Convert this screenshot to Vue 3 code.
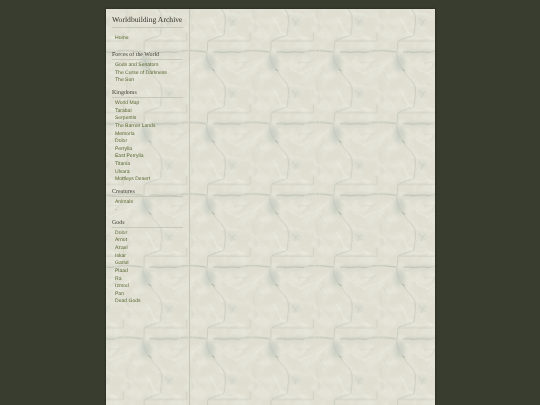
<script setup>
const sections = [
  { title: '', links: ['Home'] },
  { title: 'Forces of the World', links: ['Gods and Senators', 'The Curse of Darkness', 'The Sun'] },
  { title: 'Kingdoms', links: ['World Map', 'Tarabal', 'Serpentis', 'The Barren Lands', 'Memoria', 'Dolor', 'Perrylia', 'East Perrylia', 'Titania', 'Ulvara', 'Mottleys Desert'] },
  { title: 'Creatures', links: ['Animals', '-'] },
  { title: 'Gods', links: ['Dolor', 'Arnot', 'Azael', 'Iskar', 'Gariut', 'Plaad', 'Ra', 'Izmod', 'Pan', 'Dead Gods'] }
]
const offsets = [[0, 0], [0, -71.7], [0, 71.7], [-63.4, 0], [63.4, 0], [-63.4, -71.7], [63.4, -71.7], [-63.4, 71.7], [63.4, 71.7]]
</script>

<template>
  <div class="page">
    <div class="sheet">
      <svg class="marble" aria-hidden="true">
        <defs>
          <filter id="soft" x="-60%" y="-60%" width="220%" height="220%"><feGaussianBlur stdDeviation="2.2" /></filter>
          <filter id="wobble" x="-10%" y="-10%" width="120%" height="120%">
            <feTurbulence type="fractalNoise" baseFrequency="0.3" numOctaves="3" seed="4" result="n" />
            <feDisplacementMap in="SourceGraphic" in2="n" scale="2" xChannelSelector="R" yChannelSelector="G" />
            <feGaussianBlur stdDeviation="0.22" />
          </filter>
          <filter id="mottle" x="0" y="0" width="100%" height="100%">
            <feTurbulence type="fractalNoise" baseFrequency="0.1" numOctaves="4" seed="9" stitchTiles="stitch" />
            <feColorMatrix type="matrix" values="0 0 0 0 0.93  0 0 0 0 0.92  0 0 0 0 0.87  0.8 0 0 0 -0.32" />
          </filter>
          <g id="veins">
            <ellipse cx="3" cy="54" rx="5" ry="8" fill="#b9c3ba" opacity="0.5" filter="url(#soft)" />
            <ellipse cx="24" cy="43" rx="17" ry="3" fill="#cbd0c5" opacity="0.35" filter="url(#soft)" />
            <ellipse cx="26" cy="13" rx="4" ry="4" fill="#cbd0c6" opacity="0.4" filter="url(#soft)" />
            <g fill="none" filter="url(#wobble)">
              <path d="M7.3 61C10 68 18 72 19 79C20 85 18 92 18 98C12 100 6 101 2 104" stroke="#aeb4a8" stroke-width=".45" />
              <path d="M2 32L44 32V24" stroke="#b8bdb1" stroke-width=".4" />
              <path d="M2 32C1 36 2 40 1 43C0 48 1 54 7.3 61" stroke="#b2b8ae" stroke-width=".45" />
              <path d="M7 43C13 42 16 44 22 43C28 42 30 44 35 43C40 41 50 41 63.4 43" stroke="#a5ada2" stroke-width=".6" />
              <path d="M6 60L8.5 61.5" stroke="#8f9c95" stroke-width=".9" />
              <path d="M22 9C24 13 29 12 28 16M25 17C27 14 24 12 30 11" stroke="#b8beb3" stroke-width=".4" />
              <path d="M28 55C33 51 38 56 44 51M33 60C36 56 37 57 40 53" stroke="#c6cac0" stroke-width=".35" />
              <path d="M48 0C46 8 52 14 49 24M50 62C53 66 52 69 56 72" stroke="#c9cdc2" stroke-width=".35" />
              <path d="M3 8C10 14 8 22 16 27C24 34 30 24 38 30M30 66C38 58 48 62 58 50" stroke="#f3f2ea" stroke-width=".5" />
              <path d="M8 48C16 52 20 62 32 64M44 8C50 16 58 16 62 30M14 4C20 7 28 2 36 8" stroke="#efefe6" stroke-width=".45" />
            </g>
          </g>
          <pattern id="marbleTile" width="63.4" height="71.7" x="36.6" y="0" patternUnits="userSpaceOnUse">
            <rect width="63.4" height="71.7" fill="#dfded1" />
            <rect width="63.4" height="71.7" filter="url(#mottle)" />
            <use v-for="(o, i) in offsets" :key="i" href="#veins" :x="o[0]" :y="o[1]" />
          </pattern>
        </defs>
        <rect width="100%" height="100%" fill="url(#marbleTile)" />
      </svg>
      <aside class="side">
        <h1 class="brand">Worldbuilding Archive</h1>
        <section v-for="s in sections" :key="s.title" class="block">
          <h2 v-if="s.title" class="head">{{ s.title }}</h2>
          <ul class="list">
            <li v-for="l in s.links" :key="l" class="item"><a class="link">{{ l }}</a></li>
          </ul>
        </section>
      </aside>
    </div>
  </div>
</template>

<style>
html, body { margin: 0; background: #383d30; overflow: hidden; }
</style>

<style scoped>
.page {
  width: 540px;
  height: 405px;
  background: #383d30;
  padding-top: 9px;
  box-sizing: border-box;
  overflow: hidden;
  text-rendering: geometricPrecision;
}
.sheet {
  position: relative;
  width: 329px;
  height: 396px;
  margin-left: 106px;
  box-shadow: 0 0 2px rgba(20, 22, 15, .7);
}
.marble {
  position: absolute;
  inset: 0;
  width: 100%;
  height: 100%;
}
.side {
  position: relative;
  width: 84px;
  height: 100%;
  box-sizing: border-box;
  padding: 5px 6px 0;
  border-right: 1px solid #c6c8b9;
  will-change: transform;
}
.brand {
  margin: 0;
  height: 13px;
  font: 400 7.65px/11px "Liberation Serif", serif;
  color: #35352e;
  white-space: nowrap;
  border-bottom: 1px solid #c6c8b9;
}
.head {
  margin: 3.2px 0 1.8px;
  height: 9.4px;
  font: 400 5.95px/10px "Liberation Serif", serif;
  color: #3c3c34;
  white-space: nowrap;
  border-bottom: 1px solid #c6c8b9;
}
.list {
  list-style: none;
  margin: 0;
  padding: 0 0 0 3px;
}
.block:first-of-type .list { margin: 7.2px 0 7px; }
.item {
  height: 7.62px;
  font: 400 5.05px/7.62px "Liberation Sans", sans-serif;
  white-space: nowrap;
}
.link { color: #5a6932; }
</style>
